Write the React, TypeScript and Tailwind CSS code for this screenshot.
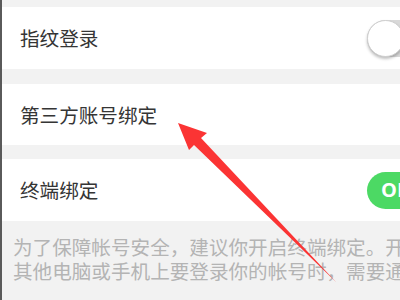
import React from "react";

export default function App() {
  const font = { fontFamily: '"Noto Sans CJK SC", "Noto Sans", sans-serif' };
  return (
    <div
      className="relative w-[400px] h-[300px] overflow-hidden bg-[#f2f2f2] border-l-2 border-[#5a5a5a]"
      style={font}
    >
      <div className="pt-[7px] flex flex-col">
        <div className="h-[62px] bg-white flex items-center justify-between pl-[18px]">
          <span className="text-[19.6px] text-[#353535]">指纹登录</span>
          <div className="relative w-[62px] h-[37px] mr-[-29px] rounded-full bg-[#d9d9d9]">
            <div className="absolute left-0 top-0 w-[37px] h-[37px] rounded-full bg-white border border-[#cfcfcf] shadow-[0_2px_3px_rgba(0,0,0,0.25)]" />
          </div>
        </div>
        <div className="h-[15px]" />
        <div className="h-[61px] bg-white flex items-center pl-[18px]">
          <span className="text-[19.6px] text-[#353535]">第三方账号绑定</span>
        </div>
        <div className="h-[14px]" />
        <div className="h-[62px] bg-white flex items-center justify-between pl-[18px]">
          <span className="text-[19.6px] text-[#353535]">终端绑定</span>
          <div className="w-[62px] h-[37px] mr-[-29px] rounded-full bg-[#4cd964] flex items-center pl-[14px]">
            <span className="text-white text-[20px] font-bold leading-none" style={{ fontFamily: '"Open Sans", sans-serif' }}>ON</span>
          </div>
        </div>
        <div className="pl-[11px] pt-[14px] text-[19.6px] leading-[24px] text-[#b4b4b4] whitespace-nowrap">
          <div>为了保障帐号安全，建议你开启终端绑定。开</div>
          <div>其他电脑或手机上要登录你的帐号时，需要通</div>
        </div>
      </div>
      <svg className="absolute left-0 top-0" width="400" height="300" viewBox="0 0 400 300">
        <polygon
          points="176,123 205,133 199,138 334,282 192,145 187,150"
          fill="#fb3434"
        />
      </svg>
    </div>
  );
}
